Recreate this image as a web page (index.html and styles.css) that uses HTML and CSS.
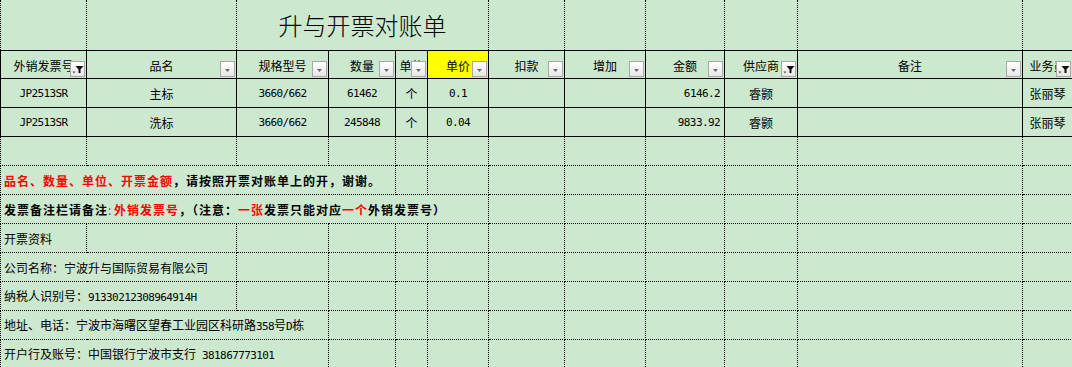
FILE: index.html
```html
<!DOCTYPE html>
<html lang="zh">
<head>
<meta charset="utf-8">
<title>升与开票对账单</title>
<link rel="stylesheet" href="styles.css">
</head>
<body>
<table class="sheet">
  <colgroup>
    <col class="c1"><col class="c2"><col class="c3"><col class="c4"><col class="c5"><col class="c6">
    <col class="c7"><col class="c8"><col class="c9"><col class="c10"><col class="c11"><col class="c12">
  </colgroup>
  <tr class="r-title">
    <td></td><td></td><td colspan="4" class="title">升与开票对账单</td><td></td><td></td><td></td><td></td><td></td><td></td>
  </tr>
  <tr class="r-head">
    <td class="hd">外销发票号<span class="fb"><svg viewBox="0 0 13 14" width="13" height="14"><path d="M4.5 4h8l-3 3.5v3.5h-2v-3.5z" fill="#111"/><path d="M1.4 9.6h3.2l-1.6 2z" fill="#555"/></svg></span></td>
    <td class="hd">品名<span class="fb"><svg viewBox="0 0 13 14" width="13" height="14"><path d="M4 7h5l-2.5 3z" fill="#6d6d6d"/></svg></span></td>
    <td class="hd">规格型号<span class="fb"><svg viewBox="0 0 13 14" width="13" height="14"><path d="M4 7h5l-2.5 3z" fill="#6d6d6d"/></svg></span></td>
    <td class="hd">数量<span class="fb"><svg viewBox="0 0 13 14" width="13" height="14"><path d="M4 7h5l-2.5 3z" fill="#6d6d6d"/></svg></span></td>
    <td class="hd">单位<span class="fb"><svg viewBox="0 0 13 14" width="13" height="14"><path d="M4 7h5l-2.5 3z" fill="#6d6d6d"/></svg></span></td>
    <td class="hd hl">单价<span class="fb"><svg viewBox="0 0 13 14" width="13" height="14"><path d="M4 7h5l-2.5 3z" fill="#6d6d6d"/></svg></span></td>
    <td class="hd">扣款<span class="fb"><svg viewBox="0 0 13 14" width="13" height="14"><path d="M4 7h5l-2.5 3z" fill="#6d6d6d"/></svg></span></td>
    <td class="hd">增加<span class="fb"><svg viewBox="0 0 13 14" width="13" height="14"><path d="M4 7h5l-2.5 3z" fill="#6d6d6d"/></svg></span></td>
    <td class="hd">金额<span class="fb"><svg viewBox="0 0 13 14" width="13" height="14"><path d="M4 7h5l-2.5 3z" fill="#6d6d6d"/></svg></span></td>
    <td class="hd">供应商<span class="fb"><svg viewBox="0 0 13 14" width="13" height="14"><path d="M4.5 4h8l-3 3.5v3.5h-2v-3.5z" fill="#111"/><path d="M1.4 9.6h3.2l-1.6 2z" fill="#555"/></svg></span></td>
    <td class="hd">备注<span class="fb"><svg viewBox="0 0 13 14" width="13" height="14"><path d="M4 7h5l-2.5 3z" fill="#6d6d6d"/></svg></span></td>
    <td class="hd">业务员<span class="fb"><svg viewBox="0 0 13 14" width="13" height="14"><path d="M4.5 4h8l-3 3.5v3.5h-2v-3.5z" fill="#111"/><path d="M1.4 9.6h3.2l-1.6 2z" fill="#555"/></svg></span></td>
  </tr>
  <tr class="r-data">
    <td class="num">JP2513SR</td><td>主标</td><td class="num">3660/662</td><td class="num">61462</td><td>个</td><td class="num">0.1</td>
    <td></td><td></td><td class="num amt">6146.2</td><td>睿颢</td><td></td><td>张丽琴</td>
  </tr>
  <tr class="r-data">
    <td class="num">JP2513SR</td><td>洗标</td><td class="num">3660/662</td><td class="num">245848</td><td>个</td><td class="num">0.04</td>
    <td></td><td></td><td class="num amt">9833.92</td><td>睿颢</td><td></td><td>张丽琴</td>
  </tr>
  <tr class="r-grid">
    <td></td><td></td><td></td><td></td><td></td><td></td><td></td><td></td><td></td><td></td><td></td><td></td>
  </tr>
  <tr class="r-grid">
    <td colspan="4" class="note"><span class="red">品名、数量、单位、开票金额</span>，请按照开票对账单上的开，谢谢。</td>
    <td></td><td></td><td></td><td></td><td></td><td></td><td></td><td></td>
  </tr>
  <tr class="r-grid">
    <td colspan="6" class="note">发票备注栏请备注<span class="half">:</span><span class="red">外销发票号</span>，（注意：<span class="red">一张</span>发票只能对应<span class="red">一个</span>外销发票号）</td>
    <td></td><td></td><td></td><td></td><td></td><td></td>
  </tr>
  <tr class="r-grid">
    <td class="info">开票资料</td><td></td><td></td><td></td><td></td><td></td><td></td><td></td><td></td><td></td><td></td><td></td>
  </tr>
  <tr class="r-grid">
    <td colspan="2" class="info">公司名称：宁波升与国际贸易有限公司</td><td></td><td></td><td></td><td></td><td></td><td></td><td></td><td></td><td></td><td></td>
  </tr>
  <tr class="r-grid">
    <td colspan="2" class="info">纳税人识别号：<span class="num">91330212308964914H</span></td><td></td><td></td><td></td><td></td><td></td><td></td><td></td><td></td><td></td><td></td>
  </tr>
  <tr class="r-grid">
    <td colspan="3" class="info">地址、电话：宁波市海曙区望春工业园区科研路<span class="num">358</span>号<span class="num">D</span>栋</td><td></td><td></td><td></td><td></td><td></td><td></td><td></td><td></td><td></td>
  </tr>
  <tr class="r-grid">
    <td colspan="3" class="info">开户行及账号：中国银行宁波市支行<span class="num"> 381867773101</span></td><td></td><td></td><td></td><td></td><td></td><td></td><td></td><td></td><td></td>
  </tr>
</table>
</body>
</html>
```

FILE: styles.css
```css
html, body {
  margin: 0;
  padding: 0;
  background: #cce8cf;
}
body {
  width: 1072px;
  height: 367px;
  overflow: hidden;
  font-family: "Noto Sans CJK SC", "Noto Sans", sans-serif;
  font-size: 12px;
  color: #000;
}
.sheet {
  border-collapse: collapse;
  table-layout: fixed;
  width: 1072px;
  background: #cce8cf;
}
.c1 { width: 86px; }
.c2 { width: 150px; }
.c3 { width: 92px; }
.c4 { width: 67px; }
.c5 { width: 32px; }
.c6 { width: 61px; }
.c7 { width: 76px; }
.c8 { width: 81px; }
.c9 { width: 79px; }
.c10 { width: 73px; }
.c11 { width: 225px; }
.c12 { width: 50px; }

.sheet td {
  border: 1px dotted #000;
  padding: 0 3px;
  white-space: nowrap;
  overflow: hidden;
  text-align: center;
  vertical-align: middle;
  line-height: 14px;
}
.r-title td {
  height: 50px;
  border-top: none;
}
.r-head td {
  height: 25px;
  border: 1px solid #000;
  position: relative;
  padding-top: 2px;
  padding-bottom: 0;
}
.r-data td {
  height: 26px;
  border: 1px solid #000;
  padding-top: 2px;
}
.r-grid td {
  height: 27px;
  text-align: left;
  padding-left: 3px;
  padding-top: 1px;
}
.title {
  font-size: 24px;
  line-height: 28px;
  font-weight: 300;
  letter-spacing: 0;
}
.hl {
  background: #ffff00;
}
.fb {
  position: absolute;
  right: 1px;
  bottom: 1px;
  width: 13px;
  height: 14px;
  border: 1px solid #a8a8a8;
  background: linear-gradient(#ffffff, #e6e6e6);
  display: block;
}
.fb svg {
  display: block;
}
.num {
  font-family: "DejaVu Sans Mono", "Liberation Mono", monospace;
  font-size: 11px;
  letter-spacing: -0.6px;
}
.amt {
  text-align: right !important;
  padding-right: 4px !important;
}
.note {
  font-weight: bold;
  letter-spacing: 1px;
}
.red {
  color: #ff0000;
}
.half {
  display: inline-block;
  width: 6px;
  letter-spacing: 0;
  font-weight: normal;
  color: #555;
}
.info {
  font-weight: normal;
}
```
